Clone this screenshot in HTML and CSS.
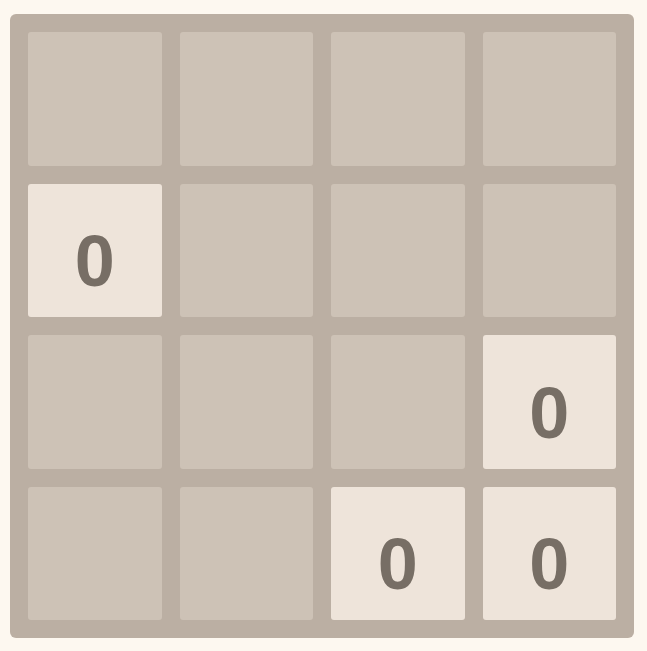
FILE: index.html
```html
<!DOCTYPE html>
<html lang="en">
<head>
    <meta charset="UTF-8">
    <meta name="viewport" content="width=device-width, initial-scale=1.0">
    <title>2048</title>
    <link rel="stylesheet" href="styles.css">
</head>
<body>

    <div class="board">
        <div class="cell"></div>
        <div class="cell"></div>
        <div class="cell"></div>
        <div class="cell"></div>

        <div class="cell tile">0</div>
        <div class="cell"></div>
        <div class="cell"></div>
        <div class="cell"></div>

        <div class="cell"></div>
        <div class="cell"></div>
        <div class="cell"></div>
        <div class="cell tile">0</div>

        <div class="cell"></div>
        <div class="cell"></div>
        <div class="cell tile">0</div>
        <div class="cell tile">0</div>
    </div>

</body>
</html>
```

FILE: styles.css
```css
body {
    font-family: "Liberation Sans", Arial, sans-serif;
    margin: 0;
    padding: 14px 0 0 10px;
    background-color: #fdf8f0;
}
.board {
    width: 624px;
    height: 624px;
    box-sizing: border-box;
    padding: 18px;
    border-radius: 6px;
    background-color: #bbafa3;
    display: grid;
    grid-template-columns: repeat(4, 1fr);
    grid-template-rows: repeat(4, 1fr);
    gap: 18px;
}
.cell {
    border-radius: 3px;
    background-color: #cdc2b6;
}
.tile {
    background-color: #eee4da;
    color: #776e65;
    font-weight: bold;
    font-size: 72px;
    display: flex;
    justify-content: center;
    align-items: center;
    padding-top: 22px;
}
```
